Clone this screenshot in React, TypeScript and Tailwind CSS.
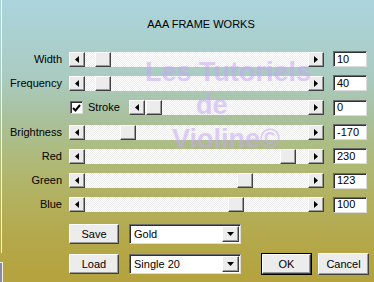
import React from "react";

const raised =
  "bg-[#ececec] border border-t-white border-l-white border-r-[#404040] border-b-[#404040] shadow-[inset_-1px_-1px_0_#9a9a9a]";
const sunken =
  "bg-white border border-t-[#6a6a6a] border-l-[#6a6a6a] border-r-[#dcdcdc] border-b-[#dcdcdc] shadow-[inset_1px_1px_0_#303030]";

function LeftArrow() {
  return (
    <svg width="4" height="7" viewBox="0 0 4 7">
      <path d="M4 0 L0 3.5 L4 7 Z" fill="#000" />
    </svg>
  );
}
function RightArrow() {
  return (
    <svg width="4" height="7" viewBox="0 0 4 7">
      <path d="M0 0 L4 3.5 L0 7 Z" fill="#000" />
    </svg>
  );
}
function DownArrow() {
  return (
    <svg width="7" height="4" viewBox="0 0 7 4">
      <path d="M0 0 L7 0 L3.5 4 Z" fill="#000" />
    </svg>
  );
}

function Slider({ width, thumb }: { width: number; thumb: number }) {
  return (
    <div
      className="flex h-[15px] shrink-0 bg-[repeating-conic-gradient(#ffffff_0_25%,#ececec_0_50%)] bg-[length:2px_2px]"
      style={{ width }}
    >
      <div className={`w-[16px] h-[15px] shrink-0 flex items-center justify-center ${raised}`}>
        <LeftArrow />
      </div>
      <div className="flex-1 h-[15px] flex">
        <div className="shrink-0" style={{ width: thumb - 16 }} />
        <div className={`w-[16px] h-[15px] shrink-0 ${raised}`} />
      </div>
      <div className={`w-[16px] h-[15px] shrink-0 flex items-center justify-center ${raised}`}>
        <RightArrow />
      </div>
    </div>
  );
}

function ValueBox({ v }: { v: string }) {
  return (
    <div className={`ml-[9px] w-[34px] h-[16px] shrink-0 flex items-center pl-[3px] text-[11px] leading-none ${sunken}`}>
      {v}
    </div>
  );
}

function Row({ label, v, thumb }: { label: string; v: string; thumb: number }) {
  return (
    <div className="flex items-center h-[24.3px]">
      <div className="w-[62px] text-right text-[11px] leading-none">{label}</div>
      <div className="ml-[7px]">
        <Slider width={255} thumb={thumb} />
      </div>
      <ValueBox v={v} />
    </div>
  );
}

function Btn({ label, cls }: { label: string; cls: string }) {
  return (
    <div className={`flex items-center justify-center text-[11px] leading-none ${raised} ${cls}`}>
      {label}
    </div>
  );
}

function Combo({ v }: { v: string }) {
  return (
    <div className={`ml-[10px] w-[112px] h-[20px] flex items-center ${sunken}`}>
      <div className="flex-1 pl-[4px] text-[11px] leading-none">{v}</div>
      <div className={`w-[17px] h-[16px] mr-[1px] flex items-center justify-center ${raised}`}>
        <DownArrow />
      </div>
    </div>
  );
}

export default function App() {
  return (
    <div
      className="relative w-[374px] h-[282px] overflow-hidden text-black bg-[linear-gradient(180deg,#abd4dd_0%,#a9cbc0_28%,#a9c09c_42%,#aebb7c_55%,#b2b160_70%,#b4a84a_85%,#b4a33e_100%)]"
      style={{ fontFamily: '"Liberation Sans", Arial, sans-serif' }}
    >
      {/* window edge */}
      <div className="absolute left-[1px] top-0 w-[1px] h-[253px] bg-[#eef4f0]" />
      <div className="absolute left-0 top-[262px] w-[3px] h-[20px] border-r border-t border-[#f0f0f0] bg-[#8a8aa0]" />

      <div className="flex flex-col">
        <div className="h-[47px] pt-[19px] text-center text-[11px] leading-none pl-[28px]">AAA FRAME WORKS</div>
        <Row label="Width" v="10" thumb={26} />
        <Row label="Frequency" v="40" thumb={26} />
        <div className="flex items-center h-[24.3px]">
          <div className="w-[62px]" />
          <div className="ml-[7px] w-[60px] flex items-center">
            <div className={`ml-[1px] w-[13px] h-[13px] flex items-center justify-center ${sunken}`}>
              <svg width="9" height="8" viewBox="0 0 9 8">
                <path d="M1 4 L3.5 6.5 L8 1" stroke="#000" strokeWidth="2" fill="none" />
              </svg>
            </div>
            <div className="ml-[5px] text-[11px] leading-none">Stroke</div>
          </div>
          <Slider width={195} thumb={17} />
          <ValueBox v="0" />
        </div>
        <Row label="Brightness" v="-170" thumb={51} />
        <Row label="Red" v="230" thumb={211} />
        <Row label="Green" v="123" thumb={168} />
        <Row label="Blue" v="100" thumb={159} />

        <div className="mt-[7px] flex items-center pl-[69px] h-[20px]">
          <Btn label="Save" cls="w-[50px] h-[20px]" />
          <Combo v="Gold" />
        </div>
        <div className="mt-[10px] flex items-center pl-[69px] h-[20px]">
          <Btn label="Load" cls="w-[50px] h-[20px]" />
          <Combo v="Single 20" />
          <div className="ml-[20px] w-[51px] h-[22px] border border-black flex">
            <Btn label="OK" cls="flex-1 h-full" />
          </div>
          <Btn label="Cancel" cls="ml-[6px] w-[51px] h-[22px]" />
        </div>
      </div>

      {/* watermark */}
      <div
        className="absolute inset-0 pointer-events-none font-bold text-[27px] leading-[27px] text-[#c6a8f4] opacity-55"
        style={{ fontFamily: '"Liberation Sans", Arial, sans-serif' }}
      >
        <div className="absolute left-[145px] top-[59px]">Les Tutoriels</div>
        <div className="absolute left-[196px] top-[92px]">de</div>
        <div className="absolute left-[172px] top-[126px]">Violine©</div>
      </div>
    </div>
  );
}
